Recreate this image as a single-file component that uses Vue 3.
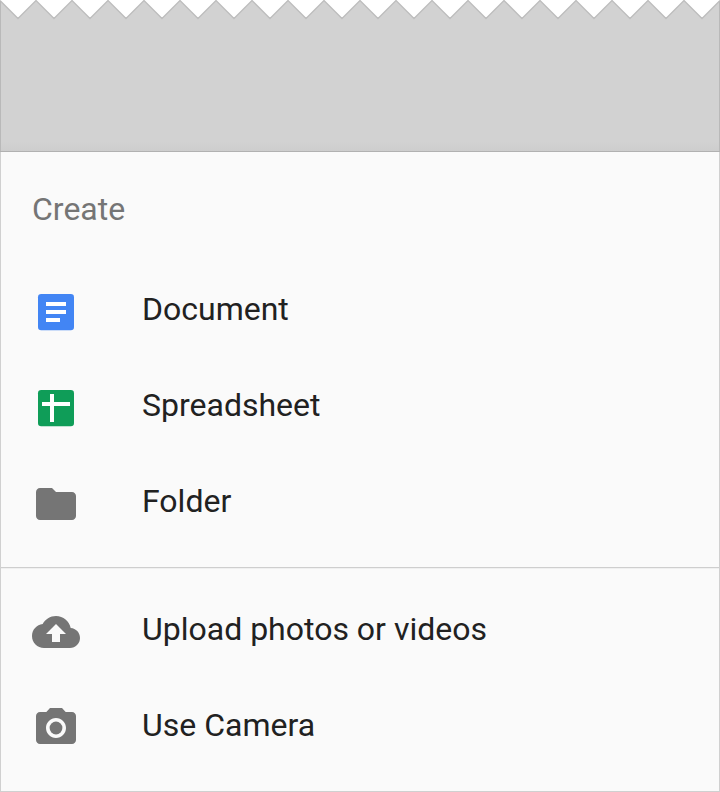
<script setup>
const groups = [
  {
    title: 'Create',
    items: [
      { label: 'Document', icon: 'document' },
      { label: 'Spreadsheet', icon: 'sheet' },
      { label: 'Folder', icon: 'folder' },
    ],
  },
  {
    items: [
      { label: 'Upload photos or videos', icon: 'upload' },
      { label: 'Use Camera', icon: 'camera' },
    ],
  },
]

const icons = {
  folder: 'M10 4H4c-1.1 0-1.99.9-1.99 2L2 18c0 1.1.9 2 2 2h16c1.1 0 2-.9 2-2V8c0-1.1-.9-2-2-2h-8l-2-2z',
  upload: 'M19.35 10.04C18.67 6.59 15.64 4 12 4 9.11 4 6.6 5.64 5.35 8.04 2.34 8.36 0 10.91 0 14c0 3.31 2.69 6 6 6h13c2.76 0 5-2.24 5-5 0-2.64-2.05-4.78-4.65-4.96zM14 13v4h-4v-4H7l5-5 5 5h-3z',
  camera: 'M9 2L7.17 4H4c-1.1 0-2 .9-2 2v12c0 1.1.9 2 2 2h16c1.1 0 2-.9 2-2V6c0-1.1-.9-2-2-2h-3.17L15 2H9zm3 15c-2.76 0-5-2.24-5-5s2.24-5 5-5 5 2.24 5 5-2.24 5-5 5z',
}

let zigzag = 'M0 .5'
for (let x = 18; x <= 720; x += 18) zigzag += `L${x} ${(x / 18) % 2 ? 18.5 : 0.5}`
</script>

<template>
  <main class="screen">
    <div class="backdrop">
      <svg class="torn" viewBox="0 0 720 20" width="720" height="20">
        <path class="torn-fill" :d="zigzag + 'V20H0Z'" />
        <path class="torn-line" :d="zigzag" />
        <path class="torn-edge" d="M.5 1V20M719.5 1V20" />
      </svg>
      <div class="shade"></div>
    </div>
    <section class="sheet">
      <div v-for="(group, i) in groups" :key="i" class="group">
        <h2 v-if="group.title" class="title">{{ group.title }}</h2>
        <ul class="list">
          <li v-for="item in group.items" :key="item.label" class="row">
            <svg class="icon" viewBox="0 0 24 24">
              <template v-if="item.icon === 'document'">
                <rect class="blue" x="3" y="3" width="18" height="18.15" rx="1.6" />
                <path class="white" d="M7 7h10v2H7zM7 11h10v2H7zM7 15h7v2H7z" />
              </template>
              <template v-else-if="item.icon === 'sheet'">
                <rect class="green" x="3" y="3" width="18" height="18.15" rx="1.6" />
                <path class="white" d="M9 5h2v4h8v2h-8v8H9v-8H5V9h4z" />
              </template>
              <template v-else>
                <path :d="icons[item.icon]" />
                <circle v-if="item.icon === 'camera'" cx="12" cy="12" r="3.2" />
              </template>
            </svg>
            <span class="label">{{ item.label }}</span>
          </li>
        </ul>
      </div>
    </section>
  </main>
</template>

<style>
body {
  background: #fff;
}
</style>

<style scoped>
.screen {
  width: 720px;
  height: 792px;
  display: flex;
  flex-direction: column;
  font-family: Roboto, sans-serif;
  overflow: hidden;
}
.backdrop {
  flex: none;
  height: 152px;
  box-sizing: border-box;
  display: flex;
  flex-direction: column;
  border-bottom: 1px solid #b1b1b1;
}
.torn {
  display: block;
  flex: none;
}
.torn-fill {
  fill: #d2d2d2;
}
.torn-line {
  fill: none;
  stroke: #bdbdbd;
  stroke-width: 1.3;
}
.torn-edge {
  fill: none;
  stroke: #b9b9b9;
}
.shade {
  flex: 1;
  background: linear-gradient(#d2d2d2 93%, #cdcdcd);
  border: solid #b9b9b9;
  border-width: 0 1px;
}
.sheet {
  flex: 1;
  box-sizing: border-box;
  background: #fafafa;
  border: solid #d0d0d0;
  border-width: 0 1px 1px;
}
.title {
  margin: 0;
  height: 96px;
  padding: 38px 31px 0;
  box-sizing: border-box;
  font-size: 32px;
  line-height: 38px;
  font-weight: 400;
  color: #757575;
}
.list {
  margin: 0;
  padding: 16px 0 15px;
  list-style: none;
}
.group + .group {
  border-top: 1px solid #cecece;
}
.group + .group .list {
  padding-top: 15px;
  border-top: 1px solid #f0f0f0;
}
.row {
  height: 96px;
  display: flex;
  align-items: center;
  padding-left: 31px;
  box-sizing: border-box;
}
.icon {
  width: 48px;
  height: 48px;
  margin-right: 62px;
  fill: #757575;
}
.icon .blue {
  fill: #4285f4;
}
.icon .green {
  fill: #0f9d58;
}
.icon .white {
  fill: #fff;
}
.label {
  font-size: 32px;
  line-height: 38px;
  padding-bottom: 6px;
  color: #212121;
}
</style>
